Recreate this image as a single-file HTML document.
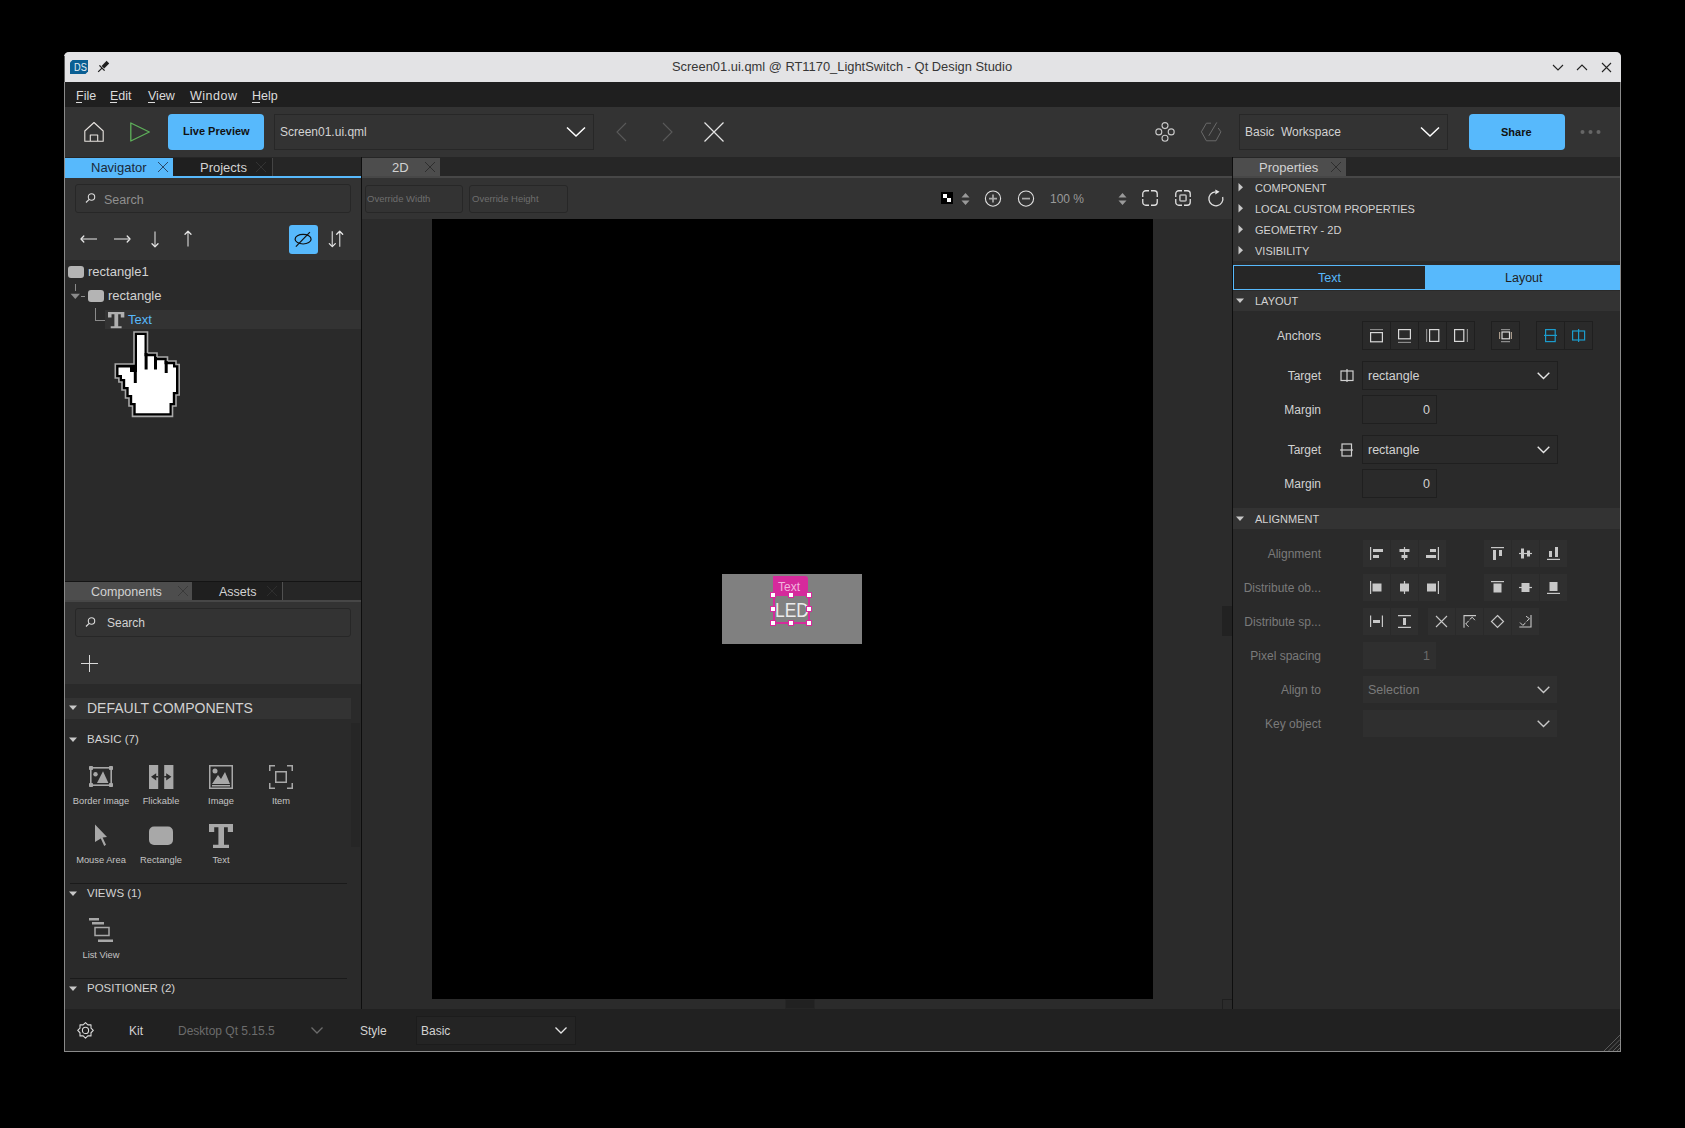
<!DOCTYPE html>
<html><head><meta charset="utf-8">
<style>
*{margin:0;padding:0;box-sizing:border-box}
html,body{width:1685px;height:1128px;background:#000;overflow:hidden;font-family:"Liberation Sans",sans-serif;color:#d2d2d2}
.a{position:absolute}
.t{position:absolute;white-space:nowrap;line-height:1}
svg{position:absolute;overflow:visible}
.ic{fill:none;stroke:#dadada;stroke-width:1.2}
.hd{position:absolute;height:21px;font-size:11px;color:#d2d2d2}
.lbl{position:absolute;font-size:12px;color:#d2d2d2;text-align:right;width:120px;line-height:1;white-space:nowrap}
.cl{position:absolute;font-size:9.3px;color:#c4c4c4;text-align:center;width:60px;line-height:1;white-space:nowrap}
.btn{position:absolute;width:28px;height:28px;border:1px solid #1f1f1f;background:#2a2a2a}
.abtn{position:absolute;width:28px;height:27px;background:#2f2f2f}
</style></head><body>
<!-- WINDOW FRAME -->
<div class="a" style="left:64px;top:52px;width:1557px;height:1000px;background:#2b2b2b;border:1px solid #8a8a8a;border-top:none;border-radius:5px 5px 0 0"></div>
<!-- title bar -->
<div class="a" style="left:64px;top:52px;width:1557px;height:30px;background:#e3e3e5;border-radius:5px 5px 0 0"></div>
<div class="t" style="left:672px;top:61px;font-size:12.9px;color:#363636">Screen01.ui.qml @ RT1170_LightSwitch - Qt Design Studio</div>
<div class="a" style="left:64px;top:56px;width:1px;height:26px;background:#5a5a5a"></div>
<svg style="left:70px;top:60px" width="18" height="14"><path d="M0 2.5 L2.5 0 H18 V11.5 L15.5 14 H0 Z" fill="#0b5f93"/></svg>
<div class="t" style="left:73.5px;top:62.5px;font-size:10px;color:#e6eef4;transform:scaleX(0.92);transform-origin:left">DS</div>
<svg style="left:96px;top:59px" width="14" height="14"><path d="M10.6 1.8 L13.2 4.4 L8.2 9.6 L5.6 7 Z" fill="#1e1e1e"/><path d="M3.4 6.4 L8.6 11.6" stroke="#1e1e1e" stroke-width="1.3"/><path d="M2.2 12.8 L6.2 8.8" stroke="#1e1e1e" stroke-width="1.2"/></svg>
<svg style="left:1552px;top:62px" width="60" height="10"><path d="M1 3 L6 8 L11 3" class="ic" style="stroke:#222;stroke-width:1.1"/><path d="M25 8 L30 3 L35 8" class="ic" style="stroke:#222;stroke-width:1.1"/><path d="M50 1 L59 10 M59 1 L50 10" class="ic" style="stroke:#222;stroke-width:1.1"/></svg>

<!-- MENU BAR -->
<div class="a" style="left:65px;top:82px;width:1555px;height:25px;background:#1f1f1f"></div>
<div class="t" style="left:76px;top:90px;font-size:12.5px;color:#dcdcdc">File</div>
<div class="t" style="left:110px;top:90px;font-size:12.5px;color:#dcdcdc">Edit</div>
<div class="t" style="left:148px;top:90px;font-size:12.5px;color:#dcdcdc">View</div>
<div class="t" style="left:190px;top:90px;font-size:12.5px;color:#dcdcdc;letter-spacing:0.5px">Window</div>
<div class="t" style="left:252px;top:90px;font-size:12.5px;color:#dcdcdc">Help</div>
<div class="a" style="left:76px;top:102px;width:6px;height:1px;background:#dcdcdc"></div>
<div class="a" style="left:110px;top:102px;width:7px;height:1px;background:#dcdcdc"></div>
<div class="a" style="left:148px;top:102px;width:7px;height:1px;background:#dcdcdc"></div>
<div class="a" style="left:190px;top:102px;width:12px;height:1px;background:#dcdcdc"></div>
<div class="a" style="left:252px;top:102px;width:8px;height:1px;background:#dcdcdc"></div>

<!-- TOOLBAR -->
<div class="a" style="left:65px;top:107px;width:1555px;height:50px;background:#333333"></div>
<svg style="left:83px;top:121px" width="22" height="22"><path d="M1.8 20.3 V10 L11 1.5 L20.2 10 V20.3 Z M7.3 20.3 V14 H14.7 V20.3" class="ic" style="stroke:#e8e4e0;stroke-width:1.1;stroke-linejoin:round"/></svg>
<svg style="left:129px;top:121px" width="22" height="22"><path d="M1.8 2 L20.3 11 L1.8 20 Z" class="ic" style="stroke:#5eb05a;stroke-width:1.3;stroke-linejoin:round"/></svg>
<div class="a" style="left:168px;top:114px;width:96px;height:36px;background:#57b9fc;border-radius:4px"></div>
<div class="t" style="left:183px;top:126px;font-size:11px;font-weight:bold;color:#111">Live Preview</div>
<div class="a" style="left:274px;top:114px;width:320px;height:36px;background:#333333;border:1px solid #272727"></div>
<div class="t" style="left:280px;top:126px;font-size:12px;color:#d2d2d2">Screen01.ui.qml</div>
<svg style="left:566px;top:126px" width="20" height="12"><path d="M1 1.5 L10 10 L19 1.5" class="ic" style="stroke:#fff;stroke-width:1.5"/></svg>
<svg style="left:616px;top:122px" width="12" height="20"><path d="M10 1 L1 10 L10 19" class="ic" style="stroke:#5a5a5a;stroke-width:1.1"/></svg>
<svg style="left:662px;top:122px" width="12" height="20"><path d="M1 1 L10 10 L1 19" class="ic" style="stroke:#5a5a5a;stroke-width:1.1"/></svg>
<svg style="left:703px;top:121px" width="22" height="22"><path d="M1.5 1.5 L20.5 20.5 M20.5 1.5 L1.5 20.5" class="ic" style="stroke:#e6e6e6;stroke-width:1.2"/></svg>
<svg style="left:1155px;top:122px" width="20" height="20"><g class="ic" style="stroke:#c8c8c8;stroke-width:1.1"><circle cx="10" cy="3.6" r="3"/><circle cx="10" cy="16.2" r="3"/><circle cx="3.8" cy="9.9" r="3"/><circle cx="16.2" cy="9.9" r="3"/></g></svg>
<svg style="left:1200px;top:121px" width="22" height="22"><g class="ic" style="stroke:#6a6a6a;stroke-width:1"><path d="M11 2.2 H6.4 L1.4 10.8 L6.4 19.8 H16 L20.9 10.8 L18.2 7"/><path d="M8.8 14.8 L16.8 1.4"/></g></svg>
<div class="a" style="left:1239px;top:114px;width:209px;height:36px;background:#333333;border:1px solid #272727"></div>
<div class="t" style="left:1245px;top:126px;font-size:12px;color:#d2d2d2">Basic&nbsp; Workspace</div>
<svg style="left:1420px;top:126px" width="20" height="12"><path d="M1 1.5 L10 10 L19 1.5" class="ic" style="stroke:#fff;stroke-width:1.5"/></svg>
<div class="a" style="left:1469px;top:114px;width:96px;height:36px;background:#57b9fc;border-radius:4px"></div>
<div class="t" style="left:1501px;top:127px;font-size:11px;font-weight:bold;color:#111">Share</div>
<svg style="left:1580px;top:129px" width="22" height="6"><g fill="#666"><circle cx="2.5" cy="3" r="2"/><circle cx="10.5" cy="3" r="2"/><circle cx="18.5" cy="3" r="2"/></g></svg>

<!-- TAB ROW -->
<div class="a" style="left:65px;top:157px;width:1555px;height:21px;background:#262626"></div>

<!-- LEFT PANEL: NAVIGATOR -->
<div class="a" style="left:65px;top:158px;width:108px;height:18px;background:#57b9fc"></div>
<div class="t" style="left:91px;top:161px;font-size:13px;color:#1a2a3a">Navigator</div>
<svg style="left:157px;top:161px" width="12" height="12"><path d="M1 1 L11 11 M11 1 L1 11" class="ic" style="stroke:#2a4a6a;stroke-width:1"/></svg>
<div class="a" style="left:173px;top:158px;width:99px;height:18px;background:#1f1f1f"></div>
<div class="t" style="left:200px;top:161px;font-size:13px;color:#d2d2d2">Projects</div>
<svg style="left:255px;top:161px" width="12" height="12"><path d="M1 1 L11 11 M11 1 L1 11" class="ic" style="stroke:#333;stroke-width:1"/></svg>
<div class="a" style="left:272px;top:158px;width:1px;height:18px;background:#444"></div>
<div class="a" style="left:65px;top:176px;width:296px;height:2px;background:#57b9fc"></div>
<div class="a" style="left:65px;top:178px;width:296px;height:82px;background:#333333"></div>
<div class="a" style="left:75px;top:184px;width:276px;height:29px;background:#333333;border:1px solid #272727;border-radius:3px"></div>
<svg style="left:85px;top:193px" width="11" height="10"><circle cx="6.5" cy="4" r="3.2" class="ic" style="stroke:#dadada;stroke-width:1.1"/><path d="M4.2 6.3 L1 9.5" class="ic" style="stroke:#dadada;stroke-width:1.2"/></svg>
<div class="t" style="left:104px;top:194px;font-size:12.5px;color:#8f8f8f">Search</div>
<svg style="left:80px;top:230px" width="112" height="18"><g fill="none" stroke="#a0a0a0" stroke-width="1.7"><path d="M2 9 H17"/><path d="M34 9 H49"/><path d="M75 1.5 V16"/><path d="M108 2 V16.5"/></g><g fill="none" stroke="#e6e6e6" stroke-width="1.3" stroke-linejoin="round" stroke-linecap="round"><path d="M3.8 6 L1 9 L3.8 12"/><path d="M47.2 6 L50 9 L47.2 12"/><path d="M72 13.8 L75 16.8 L78 13.8"/><path d="M105 4.2 L108 1.2 L111 4.2"/></g></svg>
<div class="a" style="left:289px;top:225px;width:29px;height:29px;background:#57b9fc;border-radius:3px"></div>
<svg style="left:293px;top:231px" width="22" height="18"><ellipse cx="10.1" cy="8.2" rx="8" ry="4.8" class="ic" style="stroke:#111;stroke-width:1.2"/><path d="M2.9 15.6 L16.9 1.1" class="ic" style="stroke:#111;stroke-width:1.2"/></svg>
<svg style="left:328px;top:229px" width="16" height="20"><g fill="none" stroke="#b8b8b8" stroke-width="1.4"><path d="M4.3 2.2 V17"/><path d="M11.7 3 V17.8"/></g><g fill="none" stroke="#e8e8e8" stroke-width="1.3" stroke-linejoin="round" stroke-linecap="round"><path d="M1.3 14.6 L4.3 17.6 L7.3 14.6"/><path d="M8.7 5.2 L11.7 2.2 L14.7 5.2"/></g></svg>
<!-- tree -->
<div class="a" style="left:65px;top:260px;width:296px;height:321px;background:#2a2a2a"></div>
<div class="a" style="left:68px;top:266px;width:16px;height:12px;background:#b4b4b4;border-radius:3px"></div>
<div class="t" style="left:88px;top:265px;font-size:13px;color:#d2d2d2">rectangle1</div>
<div class="a" style="left:75px;top:284px;width:1px;height:7px;background:#8a8a8a"></div>
<svg style="left:70px;top:293px" width="16" height="8"><path d="M0.6 0.8 H10 L5.3 6 Z" fill="#8a8a8a"/><path d="M11 3.5 H15" stroke="#8a8a8a" stroke-width="1"/></svg>
<div class="a" style="left:88px;top:290px;width:16px;height:12px;background:#b4b4b4;border-radius:3px"></div>
<div class="t" style="left:108px;top:289px;font-size:13px;color:#d2d2d2">rectangle</div>
<div class="a" style="left:105px;top:310px;width:256px;height:19px;background:#333333"></div>
<div class="a" style="left:95px;top:308px;width:1px;height:13px;background:#8a8a8a"></div>
<div class="a" style="left:95px;top:320px;width:10px;height:1px;background:#8a8a8a"></div>
<svg style="left:108px;top:312px" width="17" height="17"><path d="M0 0 H24 V8 H18.8 V3.2 H15 V20.8 H20 V24 H4 V20.8 H9.4 V3.2 H5.2 V8 H0 Z" transform="scale(0.68)" fill="#b0b0b0"/></svg>
<div class="t" style="left:128px;top:313px;font-size:13px;color:#57b9fc">Text</div>

<!-- hand cursor -->
<svg style="left:112px;top:328px" width="72" height="92" viewBox="0 0 72 92">
<polygon points="22.0,4.0 35.5,4.0 35.5,25.0 45.0,25.0 45.0,29.0 55.5,29.0 55.5,33.0 64.0,33.0 64.0,36.5 67.2,36.5 67.2,67.0 64.0,67.0 64.0,78.0 60.5,78.0 60.5,88.4 20.5,88.4 20.5,78.0 17.0,78.0 17.0,70.0 13.5,70.0 13.5,62.0 10.0,62.0 10.0,54.0 6.9,54.0 6.9,50.0 3.3,50.0 3.3,36.0 22.0,36.0" fill="#000" stroke="#a8a8a8" stroke-width="1.6" stroke-linejoin="miter"/>
<polygon points="25.0,7.0 32.5,7.0 32.5,28.2 42.0,28.2 42.0,32.2 52.5,32.2 52.5,36.2 61.0,36.2 61.0,39.5 64.0,39.5 64.0,64.0 60.8,64.0 60.8,75.0 57.5,75.0 57.5,85.2 23.7,85.2 23.7,75.0 20.2,75.0 20.2,67.0 16.7,67.0 16.7,59.0 13.2,59.0 13.2,51.0 10.0,51.0 10.0,47.0 6.5,47.0 6.5,39.5 18.0,39.5 18.0,44.0 25.0,44.0" fill="#fff"/>
<path d="M34.1 25.0 V41.5" stroke="#000" stroke-width="3"/><path d="M43.5 29.0 V41.5" stroke="#000" stroke-width="3"/><path d="M54.2 33.0 V45.0" stroke="#000" stroke-width="3"/><path d="M23.3 40.0 V55.0" stroke="#000" stroke-width="3"/>
</svg>
<div class="a" style="left:361px;top:157px;width:1px;height:852px;background:#0e0e0e"></div>

<!-- COMPONENTS PANEL -->
<div class="a" style="left:65px;top:581px;width:296px;height:1px;background:#141414"></div>
<div class="a" style="left:65px;top:582px;width:296px;height:19px;background:#262626"></div>
<div class="a" style="left:65px;top:582px;width:127px;height:18px;background:#4d4d4d"></div>
<div class="t" style="left:91px;top:586px;font-size:12.5px;color:#d2d2d2">Components</div>
<svg style="left:177px;top:585px" width="12" height="12"><path d="M1 1 L11 11 M11 1 L1 11" class="ic" style="stroke:#3a3a3a;stroke-width:1"/></svg>
<div class="a" style="left:192px;top:582px;width:90px;height:18px;background:#1f1f1f"></div>
<div class="t" style="left:219px;top:586px;font-size:12.5px;color:#d2d2d2">Assets</div>
<svg style="left:266px;top:585px" width="12" height="12"><path d="M1 1 L11 11 M11 1 L1 11" class="ic" style="stroke:#2e2e2e;stroke-width:1"/></svg>
<div class="a" style="left:282px;top:582px;width:1px;height:18px;background:#505050"></div>
<div class="a" style="left:65px;top:600px;width:296px;height:2px;background:#474747"></div>
<div class="a" style="left:65px;top:602px;width:296px;height:82px;background:#333333"></div>
<div class="a" style="left:75px;top:608px;width:276px;height:29px;background:#333333;border:1px solid #272727;border-radius:3px"></div>
<svg style="left:85px;top:617px" width="11" height="10"><circle cx="6.5" cy="4" r="3.2" class="ic" style="stroke:#dadada;stroke-width:1.1"/><path d="M4.2 6.3 L1 9.5" class="ic" style="stroke:#dadada;stroke-width:1.2"/></svg>
<div class="t" style="left:107px;top:617px;font-size:12px;color:#d2d2d2">Search</div>
<svg style="left:81px;top:655px" width="17" height="17"><path d="M8.5 0 V17 M0 8.5 H17" class="ic" style="stroke:#dadada;stroke-width:1"/></svg>
<div class="a" style="left:65px;top:684px;width:296px;height:325px;background:#2a2a2a"></div>
<div class="a" style="left:65px;top:698px;width:286px;height:21px;background:#333333"></div>
<svg style="left:69px;top:705px" width="9" height="6"><path d="M0 0.5 H8 L4 5 Z" fill="#c8c8c8"/></svg>
<div class="t" style="left:87px;top:701px;font-size:14px;color:#d2d2d2">DEFAULT COMPONENTS</div>
<div class="a" style="left:351px;top:723px;width:9px;height:124px;background:#262626"></div>
<svg style="left:69px;top:737px" width="9" height="6"><path d="M0 0.5 H8 L4 5 Z" fill="#c8c8c8"/></svg>
<div class="t" style="left:87px;top:734px;font-size:11.5px;color:#d2d2d2">BASIC (7)</div>
<!-- row1 icons -->
<svg style="left:89px;top:766px" width="24" height="22"><g fill="#a8a8a8"><rect x="0" y="0" width="4" height="4" rx="0.8"/><rect x="20" y="0" width="4" height="4" rx="0.8"/><rect x="0" y="17" width="4" height="4" rx="0.8"/><rect x="20" y="17" width="4" height="4" rx="0.8"/></g><rect x="1.8" y="1.8" width="20.4" height="17.4" fill="none" stroke="#a8a8a8" stroke-width="1.6"/><circle cx="6.5" cy="8.3" r="2.2" fill="#a8a8a8"/><path d="M8 17 L14 5.2 L19.4 17 Z" fill="#a8a8a8"/></svg>
<svg style="left:149px;top:765px" width="24" height="24"><rect x="0" y="0" width="9.2" height="24" fill="#a8a8a8"/><rect x="15.2" y="0" width="9.2" height="24" fill="#a8a8a8"/><path d="M2 11.8 L7.2 8.2 V11 H9.2 V12.6 H7.2 V15.4 Z M22.4 11.8 L17.2 8.2 V11 H15.2 V12.6 H17.2 V15.4 Z" fill="#2a2a2a"/></svg>
<svg style="left:209px;top:765px" width="24" height="24"><rect x="0.75" y="0.75" width="22.5" height="22.5" fill="none" stroke="#a8a8a8" stroke-width="1.5"/><circle cx="6" cy="6" r="2.5" fill="#a8a8a8"/><path d="M3 19 L9 10 L12 14 L16 7 L21 19 Z" fill="#a8a8a8"/><rect x="3" y="20" width="18" height="1.5" fill="#a8a8a8"/></svg>
<svg style="left:269px;top:765px" width="24" height="24"><path d="M0.75 6 V0.75 H6 M18 0.75 H23.25 V6 M23.25 18 V23.25 H18 M6 23.25 H0.75 V18" fill="none" stroke="#a8a8a8" stroke-width="1.5"/><rect x="6.75" y="6.75" width="10.5" height="10.5" fill="none" stroke="#a8a8a8" stroke-width="1.5"/></svg>
<div class="cl" style="left:71px;top:797px">Border Image</div>
<div class="cl" style="left:131px;top:797px">Flickable</div>
<div class="cl" style="left:191px;top:797px">Image</div>
<div class="cl" style="left:251px;top:797px">Item</div>
<!-- row2 icons -->
<svg style="left:89px;top:824px" width="24" height="24"><path d="M6 0.6 L18 13 L13.6 13.6 L17 20.8 L15.2 22 L11.8 14.6 L6 18 Z" fill="#a8a8a8"/></svg>
<svg style="left:149px;top:826px" width="24" height="20"><rect x="0" y="0.6" width="24" height="18.4" rx="5" fill="#a8a8a8"/></svg>
<svg style="left:209px;top:824px" width="24" height="24"><path d="M0 0 H24 V8 H18.8 V3.2 H15 V20.8 H20 V24 H4 V20.8 H9.4 V3.2 H5.2 V8 H0 Z" fill="#a8a8a8"/></svg>
<div class="cl" style="left:71px;top:856px">Mouse Area</div>
<div class="cl" style="left:131px;top:856px">Rectangle</div>
<div class="cl" style="left:191px;top:856px">Text</div>
<div class="a" style="left:70px;top:883px;width:277px;height:1px;background:#1a1a1a"></div>
<svg style="left:69px;top:891px" width="9" height="6"><path d="M0 0.5 H8 L4 5 Z" fill="#c8c8c8"/></svg>
<div class="t" style="left:87px;top:888px;font-size:11.5px;color:#d2d2d2">VIEWS (1)</div>
<svg style="left:89px;top:918px" width="24" height="26"><g fill="#a8a8a8"><rect x="0" y="0" width="10" height="2.5"/><rect x="3" y="4" width="12" height="2.5"/><rect x="9" y="21.5" width="15" height="2.5"/></g><rect x="6" y="9.5" width="14" height="8" fill="none" stroke="#a8a8a8" stroke-width="1.5"/></svg>
<div class="cl" style="left:71px;top:951px">List View</div>
<div class="a" style="left:70px;top:978px;width:277px;height:1px;background:#1a1a1a"></div>
<svg style="left:69px;top:986px" width="9" height="6"><path d="M0 0.5 H8 L4 5 Z" fill="#c8c8c8"/></svg>
<div class="t" style="left:87px;top:983px;font-size:11.5px;color:#d2d2d2">POSITIONER (2)</div>

<!-- STATUS BAR -->
<div class="a" style="left:65px;top:1009px;width:1555px;height:42px;background:#212121"></div>
<svg style="left:77px;top:1022px" width="17" height="17"><path d="M8.5 0.6 L10.85 2.9 L14 2.9 L14 6.05 L16.3 8.4 L14 10.75 L14 13.9 L10.85 13.9 L8.5 16.2 L6.15 13.9 L3 13.9 L3 10.75 L0.7 8.4 L3 6.05 L3 2.9 L6.15 2.9 Z" fill="none" stroke="#dadada" stroke-width="1.1" stroke-linejoin="round"/><circle cx="8.5" cy="8.4" r="3.1" fill="none" stroke="#dadada" stroke-width="1.1"/></svg>
<div class="t" style="left:129px;top:1025px;font-size:12px;color:#d2d2d2">Kit</div>
<div class="t" style="left:178px;top:1025px;font-size:12px;color:#6c6c6c">Desktop Qt 5.15.5</div>
<svg style="left:311px;top:1027px" width="12" height="7"><path d="M0.5 0.5 L6 6 L11.5 0.5" class="ic" style="stroke:#6c6c6c;stroke-width:1.3"/></svg>
<div class="t" style="left:360px;top:1025px;font-size:12px;color:#d2d2d2">Style</div>
<div class="a" style="left:416px;top:1016px;width:160px;height:29px;background:#242424;border:1px solid #1c1c1c"></div>
<div class="t" style="left:421px;top:1025px;font-size:12px;color:#d2d2d2">Basic</div>
<svg style="left:555px;top:1027px" width="12" height="7"><path d="M0.5 0.5 L6 6 L11.5 0.5" class="ic" style="stroke:#e6e6e6;stroke-width:1.3"/></svg>

<!-- CENTER -->
<div class="a" style="left:362px;top:158px;width:78px;height:18px;background:#4d4d4d"></div>
<div class="t" style="left:392px;top:161px;font-size:13px;color:#d2d2d2">2D</div>
<svg style="left:424px;top:161px" width="12" height="12"><path d="M1 1 L11 11 M11 1 L1 11" class="ic" style="stroke:#2e2e2e;stroke-width:1"/></svg>
<div class="a" style="left:362px;top:176px;width:870px;height:2px;background:#474747"></div>
<div class="a" style="left:362px;top:178px;width:870px;height:41px;background:#333333"></div>
<div class="a" style="left:365px;top:185px;width:98px;height:28px;background:#333333;border:1px solid #272727;border-radius:3px"></div>
<div class="t" style="left:367px;top:194px;font-size:9.5px;color:#6e6e6e">Override Width</div>
<div class="a" style="left:469px;top:185px;width:99px;height:28px;background:#333333;border:1px solid #272727;border-radius:3px"></div>
<div class="t" style="left:472px;top:194px;font-size:9.5px;color:#6e6e6e">Override Height</div>
<svg style="left:941px;top:192px" width="12" height="12"><rect x="0" y="0" width="12" height="12" fill="#000"/><rect x="2" y="2" width="4" height="4" fill="#fff"/><rect x="6" y="6" width="4" height="4" fill="#fff"/></svg>
<svg style="left:961px;top:192px" width="9" height="14"><path d="M0.5 5.5 L4.5 1 L8.5 5.5 Z M0.5 8.5 L4.5 13 L8.5 8.5 Z" fill="#9a9a9a"/></svg>
<svg style="left:984px;top:190px" width="18" height="18"><circle cx="9" cy="8.6" r="7.6" class="ic" style="stroke:#e0e0e0;stroke-width:1.1"/><path d="M9 4.6 V12.6 M5 8.6 H13" class="ic" style="stroke:#a8a8a8;stroke-width:1.7"/></svg>
<svg style="left:1017px;top:190px" width="18" height="18"><circle cx="9" cy="8.6" r="7.6" class="ic" style="stroke:#e0e0e0;stroke-width:1.1"/><path d="M5 8.6 H13" class="ic" style="stroke:#a8a8a8;stroke-width:1.7"/></svg>
<div class="t" style="left:1050px;top:193px;font-size:12px;color:#9a9a9a">100 %</div>
<svg style="left:1118px;top:192px" width="9" height="14"><path d="M0.5 5.5 L4.5 1 L8.5 5.5 Z M0.5 8.5 L4.5 13 L8.5 8.5 Z" fill="#9a9a9a"/></svg>
<svg style="left:1142px;top:190px" width="16" height="16"><path d="M0.75 7 V3.75 A3 3 0 0 1 3.75 0.75 H7 M9 0.75 H12.25 A3 3 0 0 1 15.25 3.75 V7 M15.25 9 V12.25 A3 3 0 0 1 12.25 15.25 H9 M7 15.25 H3.75 A3 3 0 0 1 0.75 12.25 V9" fill="none" stroke="#e0e0e0" stroke-width="1.3"/></svg>
<svg style="left:1175px;top:190px" width="16" height="16"><path d="M0.75 7 V3.75 A3 3 0 0 1 3.75 0.75 H7 M9 0.75 H12.25 A3 3 0 0 1 15.25 3.75 V7 M15.25 9 V12.25 A3 3 0 0 1 12.25 15.25 H9 M7 15.25 H3.75 A3 3 0 0 1 0.75 12.25 V9" fill="none" stroke="#e0e0e0" stroke-width="1.3"/><rect x="4.9" y="5" width="6.2" height="6" rx="1" fill="none" stroke="#b8b8b8" stroke-width="1.6"/></svg>
<svg style="left:1207px;top:190px" width="18" height="18"><path d="M8.29 1.83 A7 7 0 1 0 15.66 6.99" fill="none" stroke="#e0e0e0" stroke-width="1.3"/><path d="M8.3 -0.6 L12.6 1.8 L8.3 4.4 Z" fill="#e6e6e6"/></svg>
<div class="a" style="left:362px;top:219px;width:870px;height:790px;background:#2b2b2b"></div>
<div class="a" style="left:432px;top:219px;width:721px;height:780px;background:#000"></div>
<div class="a" style="left:785px;top:999px;width:30px;height:10px;background:#212121;border:1px solid #262626"></div>
<div class="a" style="left:1222px;top:606px;width:10px;height:30px;background:#222"></div>
<div class="a" style="left:1222px;top:999px;width:10px;height:10px;border:1px solid #1f1f1f;border-right:none;border-bottom:none"></div>
<div class="a" style="left:1232px;top:157px;width:1px;height:852px;background:#0e0e0e"></div>
<!-- LED rect -->
<div class="a" style="left:722px;top:574px;width:140px;height:70px;background:#808080"></div>
<div class="a" style="left:773px;top:576px;width:35px;height:20px;background:#d62a9c;border-radius:0 3px 0 0"></div>
<div class="t" style="left:778px;top:581px;font-size:12px;color:#f2b4de">Text</div>
<div class="t" style="left:775px;top:600px;font-size:20px;color:#ececec;transform:scaleX(0.87);transform-origin:left">LED</div>
<div class="a" style="left:773px;top:594px;width:37px;height:30px;border:2px solid #d62a9c"></div>
<svg style="left:770px;top:592px" width="43" height="34"><g fill="#fff" stroke="#d62a9c" stroke-width="1"><rect x="0.5" y="0.5" width="5" height="5"/><rect x="18.5" y="0.5" width="5" height="5"/><rect x="36.5" y="0.5" width="5" height="5"/><rect x="0.5" y="14.5" width="5" height="5"/><rect x="36.5" y="14.5" width="5" height="5"/><rect x="0.5" y="28.5" width="5" height="5"/><rect x="18.5" y="28.5" width="5" height="5"/><rect x="36.5" y="28.5" width="5" height="5"/></g></svg>
<!-- RIGHT PANEL -->
<div class="a" style="left:1233px;top:158px;width:113px;height:18px;background:#4d4d4d"></div>
<div class="t" style="left:1259px;top:161px;font-size:13px;color:#d2d2d2">Properties</div>
<svg style="left:1330px;top:161px" width="12" height="12"><path d="M1 1 L11 11 M11 1 L1 11" class="ic" style="stroke:#2e2e2e;stroke-width:1"/></svg>
<div class="a" style="left:1233px;top:176px;width:387px;height:2px;background:#474747"></div>
<div class="a" style="left:1233px;top:178px;width:387px;height:86px;background:#333333"></div>
<svg style="left:1238px;top:183px" width="6" height="9"><path d="M0.5 0 V8.5 L5 4.25 Z" fill="#c8c8c8"/></svg>
<div class="t" style="left:1255px;top:183px;font-size:11px;color:#d2d2d2">COMPONENT</div>
<svg style="left:1238px;top:204px" width="6" height="9"><path d="M0.5 0 V8.5 L5 4.25 Z" fill="#c8c8c8"/></svg>
<div class="t" style="left:1255px;top:204px;font-size:11px;color:#d2d2d2">LOCAL CUSTOM PROPERTIES</div>
<svg style="left:1238px;top:225px" width="6" height="9"><path d="M0.5 0 V8.5 L5 4.25 Z" fill="#c8c8c8"/></svg>
<div class="t" style="left:1255px;top:225px;font-size:11px;color:#d2d2d2">GEOMETRY - 2D</div>
<svg style="left:1238px;top:246px" width="6" height="9"><path d="M0.5 0 V8.5 L5 4.25 Z" fill="#c8c8c8"/></svg>
<div class="t" style="left:1255px;top:246px;font-size:11px;color:#d2d2d2">VISIBILITY</div>
<div class="a" style="left:1233px;top:261px;width:387px;height:4px;background:#2b2b2b"></div>
<div class="a" style="left:1233px;top:265px;width:387px;height:25px;background:#57b9fc"></div>
<div class="a" style="left:1233px;top:265px;width:193px;height:25px;background:#262626;border:1px solid #57b9fc"></div>
<div class="t" style="left:1318px;top:272px;font-size:12.5px;color:#57b9fc">Text</div>
<div class="t" style="left:1505px;top:272px;font-size:12.5px;color:#1f1f1f">Layout</div>
<div class="a" style="left:1233px;top:290px;width:387px;height:719px;background:#2a2a2a"></div>
<div class="a" style="left:1233px;top:291px;width:387px;height:20px;background:#333333"></div>
<svg style="left:1236px;top:298px" width="9" height="6"><path d="M0 0.5 H8 L4 5 Z" fill="#c8c8c8"/></svg>
<div class="t" style="left:1255px;top:296px;font-size:11px;color:#d2d2d2">LAYOUT</div>
<!-- anchors -->
<div class="lbl" style="left:1201px;top:330px">Anchors</div>
<div class="a" style="left:1362px;top:321px;width:113px;height:29px;border:1px solid #1f1f1f"></div>
<div class="a" style="left:1390px;top:321px;width:1px;height:29px;background:#1f1f1f"></div>
<div class="a" style="left:1418px;top:321px;width:1px;height:29px;background:#1f1f1f"></div>
<div class="a" style="left:1446px;top:321px;width:1px;height:29px;background:#1f1f1f"></div>
<div class="a" style="left:1491px;top:321px;width:29px;height:29px;border:1px solid #1f1f1f"></div>
<div class="a" style="left:1536px;top:321px;width:57px;height:29px;border:1px solid #1f1f1f"></div>
<div class="a" style="left:1564px;top:321px;width:1px;height:29px;background:#1f1f1f"></div>
<svg style="left:1370px;top:329px" width="13" height="14"><path d="M0 0.6 H13" stroke="#8c8c8c" stroke-width="1.2"/><rect x="0.6" y="3.6" width="11.8" height="9.2" fill="none" stroke="#d8d8d8" stroke-width="1.2"/></svg>
<svg style="left:1398px;top:329px" width="13" height="14"><path d="M0 13.4 H13" stroke="#8c8c8c" stroke-width="1.2"/><rect x="0.6" y="0.6" width="11.8" height="9.2" fill="none" stroke="#d8d8d8" stroke-width="1.2"/></svg>
<svg style="left:1426px;top:329px" width="14" height="13"><path d="M0.6 0 V13" stroke="#8c8c8c" stroke-width="1.2"/><rect x="3.6" y="0.6" width="9.2" height="11.8" fill="none" stroke="#d8d8d8" stroke-width="1.2"/></svg>
<svg style="left:1454px;top:329px" width="14" height="13"><path d="M13.4 0 V13" stroke="#8c8c8c" stroke-width="1.2"/><rect x="0.6" y="0.6" width="9.2" height="11.8" fill="none" stroke="#d8d8d8" stroke-width="1.2"/></svg>
<svg style="left:1499px;top:329px" width="14" height="14"><path d="M2 0.6 H11 M2 12.6 H11" stroke="#8c8c8c" stroke-width="1.2"/><path d="M0.6 3 V10 M12.4 3 V10" stroke="#b0a090" stroke-width="1.1"/><rect x="3" y="3" width="7.5" height="6.8" fill="none" stroke="#d8d8d8" stroke-width="1.2"/></svg>
<svg style="left:1544px;top:329px" width="14" height="14"><rect x="1.6" y="0.6" width="9.6" height="12" fill="none" stroke="#1c9ccc" stroke-width="1.2"/><path d="M0 6.4 H13" stroke="#1c9ccc" stroke-width="1.2"/></svg>
<svg style="left:1572px;top:329px" width="14" height="14"><rect x="0.6" y="2" width="12" height="9" fill="none" stroke="#1c9ccc" stroke-width="1.2"/><path d="M6.6 0 V13" stroke="#1c9ccc" stroke-width="1.2"/></svg>
<div class="lbl" style="left:1201px;top:370px">Target</div>
<svg style="left:1340px;top:369px" width="14" height="13"><g fill="none" stroke="#d0d0d0" stroke-width="1.2"><rect x="1" y="2" width="12" height="9.5"/><path d="M7 0 V13"/></g></svg>
<div class="a" style="left:1362px;top:361px;width:196px;height:29px;border:1px solid #1f1f1f"></div>
<div class="t" style="left:1368px;top:370px;font-size:12.5px;color:#d2d2d2">rectangle</div>
<svg style="left:1537px;top:372px" width="13" height="8"><path d="M0.7 0.7 L6.5 6.5 L12.3 0.7" class="ic" style="stroke:#e6e6e6;stroke-width:1.4"/></svg>
<div class="lbl" style="left:1201px;top:404px">Margin</div>
<div class="a" style="left:1362px;top:395px;width:75px;height:29px;border:1px solid #1f1f1f"></div>
<div class="t" style="left:1423px;top:404px;font-size:12.5px;color:#d2d2d2">0</div>
<div class="lbl" style="left:1201px;top:444px">Target</div>
<svg style="left:1340px;top:443px" width="14" height="14"><g fill="none" stroke="#d0d0d0" stroke-width="1.2"><rect x="2" y="1" width="9.5" height="12"/><path d="M0 7 H13"/></g></svg>
<div class="a" style="left:1362px;top:435px;width:196px;height:29px;border:1px solid #1f1f1f"></div>
<div class="t" style="left:1368px;top:444px;font-size:12.5px;color:#d2d2d2">rectangle</div>
<svg style="left:1537px;top:446px" width="13" height="8"><path d="M0.7 0.7 L6.5 6.5 L12.3 0.7" class="ic" style="stroke:#e6e6e6;stroke-width:1.4"/></svg>
<div class="lbl" style="left:1201px;top:478px">Margin</div>
<div class="a" style="left:1362px;top:469px;width:75px;height:29px;border:1px solid #1f1f1f"></div>
<div class="t" style="left:1423px;top:478px;font-size:12.5px;color:#d2d2d2">0</div>
<!-- alignment -->
<div class="a" style="left:1233px;top:508px;width:387px;height:21px;background:#333333"></div>
<svg style="left:1236px;top:516px" width="9" height="6"><path d="M0 0.5 H8 L4 5 Z" fill="#c8c8c8"/></svg>
<div class="t" style="left:1255px;top:514px;font-size:11px;color:#d2d2d2">ALIGNMENT</div>
<div class="lbl" style="left:1201px;top:548px;color:#7a7a7a">Alignment</div>
<div class="lbl" style="left:1201px;top:582px;color:#7a7a7a">Distribute ob...</div>
<div class="lbl" style="left:1201px;top:616px;color:#7a7a7a">Distribute sp...</div>
<div class="lbl" style="left:1201px;top:650px;color:#7a7a7a">Pixel spacing</div>
<div class="lbl" style="left:1201px;top:684px;color:#7a7a7a">Align to</div>
<div class="lbl" style="left:1201px;top:718px;color:#7a7a7a">Key object</div>
<div class="abtn" style="left:1363px;top:540px;width:27px;height:27px"></div>
<svg style="left:1370px;top:547px" width="13" height="13"><path d="M0.6 0 V13" stroke="#c8c8c8" stroke-width="1.2"/><rect x="3" y="2" width="10" height="3" fill="#c8c8c8"/><rect x="3" y="8" width="6" height="3" fill="#c8c8c8"/></svg>
<div class="abtn" style="left:1391px;top:540px;width:27px;height:27px"></div>
<svg style="left:1398px;top:547px" width="13" height="13"><path d="M6.5 0 V13" stroke="#c8c8c8" stroke-width="1.2"/><rect x="1.5" y="2" width="10" height="3" fill="#c8c8c8"/><rect x="3.5" y="8" width="6" height="3" fill="#c8c8c8"/></svg>
<div class="abtn" style="left:1419px;top:540px;width:27px;height:27px"></div>
<svg style="left:1426px;top:547px" width="13" height="13"><path d="M12.4 0 V13" stroke="#c8c8c8" stroke-width="1.2"/><rect x="0" y="8" width="10" height="3" fill="#c8c8c8"/><rect x="4" y="2" width="6" height="3" fill="#c8c8c8"/></svg>
<div class="abtn" style="left:1484px;top:540px;width:27px;height:27px"></div>
<svg style="left:1491px;top:547px" width="13" height="13"><path d="M0 0.6 H13" stroke="#c8c8c8" stroke-width="1.2"/><rect x="2" y="3" width="3" height="10" fill="#c8c8c8"/><rect x="8" y="3" width="3" height="6" fill="#c8c8c8"/></svg>
<div class="abtn" style="left:1512px;top:540px;width:27px;height:27px"></div>
<svg style="left:1519px;top:547px" width="13" height="13"><path d="M0 6.5 H13" stroke="#c8c8c8" stroke-width="1.2"/><rect x="2" y="1.5" width="3" height="10" fill="#c8c8c8"/><rect x="8" y="3.5" width="3" height="6" fill="#c8c8c8"/></svg>
<div class="abtn" style="left:1540px;top:540px;width:27px;height:27px"></div>
<svg style="left:1547px;top:547px" width="13" height="13"><path d="M0 12.4 H13" stroke="#c8c8c8" stroke-width="1.2"/><rect x="2" y="4" width="3" height="6" fill="#c8c8c8"/><rect x="8" y="0" width="3" height="10" fill="#c8c8c8"/></svg>
<div class="abtn" style="left:1363px;top:574px;width:27px;height:27px"></div>
<svg style="left:1370px;top:581px" width="13" height="13"><path d="M0.6 0 V13" stroke="#c8c8c8" stroke-width="1.2"/><rect x="2.5" y="2.5" width="9" height="8" fill="#c8c8c8"/></svg>
<div class="abtn" style="left:1391px;top:574px;width:27px;height:27px"></div>
<svg style="left:1398px;top:581px" width="13" height="13"><path d="M6.5 0 V13" stroke="#c8c8c8" stroke-width="1.2"/><rect x="2" y="2.5" width="9" height="8" fill="#c8c8c8"/></svg>
<div class="abtn" style="left:1419px;top:574px;width:27px;height:27px"></div>
<svg style="left:1426px;top:581px" width="13" height="13"><path d="M12.4 0 V13" stroke="#c8c8c8" stroke-width="1.2"/><rect x="1" y="2.5" width="9" height="8" fill="#c8c8c8"/></svg>
<div class="abtn" style="left:1484px;top:574px;width:27px;height:27px"></div>
<svg style="left:1491px;top:581px" width="13" height="13"><path d="M0 0.6 H13" stroke="#c8c8c8" stroke-width="1.2"/><rect x="2.5" y="2.5" width="8" height="9" fill="#c8c8c8"/></svg>
<div class="abtn" style="left:1512px;top:574px;width:27px;height:27px"></div>
<svg style="left:1519px;top:581px" width="13" height="13"><path d="M0 6.5 H13" stroke="#c8c8c8" stroke-width="1.2"/><rect x="2.5" y="2" width="8" height="9" fill="#c8c8c8"/></svg>
<div class="abtn" style="left:1540px;top:574px;width:27px;height:27px"></div>
<svg style="left:1547px;top:581px" width="13" height="13"><path d="M0 12.4 H13" stroke="#c8c8c8" stroke-width="1.2"/><rect x="2.5" y="1" width="8" height="9" fill="#c8c8c8"/></svg>
<div class="abtn" style="left:1363px;top:608px;width:27px;height:27px"></div>
<svg style="left:1370px;top:615px" width="13" height="13"><path d="M0.6 0.5 V12 M12.4 0.5 V12" stroke="#c8c8c8" stroke-width="1.2"/><rect x="3" y="5" width="7" height="3" fill="#c8c8c8"/></svg>
<div class="abtn" style="left:1391px;top:608px;width:27px;height:27px"></div>
<svg style="left:1398px;top:615px" width="13" height="13"><path d="M0 0.6 H13 M0 12.4 H13" stroke="#c8c8c8" stroke-width="1.2"/><rect x="5" y="3" width="3" height="7" fill="#c8c8c8"/></svg>
<div class="abtn" style="left:1428px;top:608px;width:27px;height:27px"></div>
<svg style="left:1435px;top:615px" width="13" height="13"><path d="M1 1 L12 12 M12 1 L1 12" stroke="#c8c8c8" stroke-width="1.1" fill="none"/></svg>
<div class="abtn" style="left:1456px;top:608px;width:27px;height:27px"></div>
<svg style="left:1463px;top:615px" width="13" height="13"><path d="M1 0 V12.7 M1 0.6 H13" stroke="#c8c8c8" stroke-width="1.1" fill="none"/><path d="M5.5 6 L2.7 9 L5.7 11.7 M6.7 4.5 L9.2 2.2 L11.9 5.2" stroke="#c8c8c8" stroke-width="1" fill="none"/><path d="M3 8.7 L9 2.5" stroke="#c8c8c8" stroke-width="0.8" stroke-dasharray="1 1.2" fill="none" opacity="0.7"/></svg>
<div class="abtn" style="left:1484px;top:608px;width:27px;height:27px"></div>
<svg style="left:1491px;top:615px" width="13" height="13"><path d="M6.5 0.5 L12.5 6.5 L6.5 12.5 L0.5 6.5 Z" stroke="#c8c8c8" stroke-width="1.2" fill="none"/></svg>
<div class="abtn" style="left:1512px;top:608px;width:27px;height:27px"></div>
<svg style="left:1519px;top:615px" width="13" height="13"><path d="M12 0 V12.6 M0.3 12 H12" stroke="#c8c8c8" stroke-width="1.1" fill="none"/><path d="M7 1.2 L10.5 3.7 L7.8 6.2 M1 7.5 L3.8 10.4 L6.5 8" stroke="#c8c8c8" stroke-width="1" fill="none"/><path d="M3.8 10 L10 3.8" stroke="#c8c8c8" stroke-width="0.8" stroke-dasharray="1 1.2" fill="none" opacity="0.7"/></svg>
<div class="abtn" style="left:1363px;top:642px;width:73px"></div>
<div class="t" style="left:1423px;top:650px;font-size:12.5px;color:#6a6a6a">1</div>
<div class="abtn" style="left:1363px;top:676px;width:194px"></div>
<div class="t" style="left:1368px;top:684px;font-size:12.5px;color:#7a7a7a">Selection</div>
<svg style="left:1537px;top:686px" width="13" height="8"><path d="M0.7 0.7 L6.5 6.5 L12.3 0.7" class="ic" style="stroke:#c8c8c8;stroke-width:1.4"/></svg>
<div class="abtn" style="left:1363px;top:710px;width:194px"></div>
<svg style="left:1537px;top:720px" width="13" height="8"><path d="M0.7 0.7 L6.5 6.5 L12.3 0.7" class="ic" style="stroke:#c8c8c8;stroke-width:1.4"/></svg>
<svg style="left:1603px;top:1034px" width="17" height="17"><g stroke="#5a5a5a" stroke-width="1"><path d="M1 17 L17 1"/><path d="M5.5 17 L17 5.5"/><path d="M10 17 L17 10"/><path d="M14 17 L17 14"/></g></svg>
</body></html>
